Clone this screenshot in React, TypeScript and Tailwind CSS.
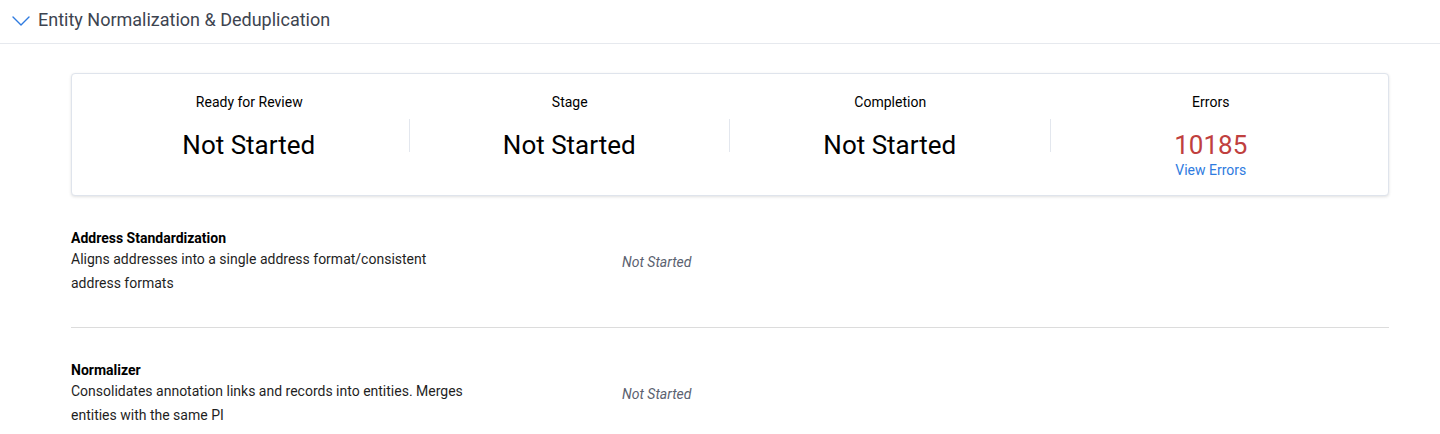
const stats = [
  { label: 'Ready for Review', value: 'Not Started' },
  { label: 'Stage', value: 'Not Started' },
  { label: 'Completion', value: 'Not Started' },
];

const steps = [
  {
    title: 'Address Standardization',
    description: 'Aligns addresses into a single address format/consistent address formats',
    status: 'Not Started',
  },
  {
    title: 'Normalizer',
    description: 'Consolidates annotation links and records into entities. Merges entities with the same PI',
    status: 'Not Started',
  },
];

export default function App() {
  return (
    <div className="min-h-screen bg-white font-['Roboto',sans-serif] text-black">
      <header className="flex h-[44px] items-center gap-[8px] border-b border-[#e6e9ee] pb-[5px] pl-[12px]">
        <svg width="18" height="10" viewBox="0 0 18 10" fill="none" className="mt-[3px]">
          <polyline points="1,1 9,9 17,1" stroke="#2f7be0" strokeWidth="1.4" strokeLinecap="round" strokeLinejoin="round" />
        </svg>
        <span className="text-[18px] text-[#3d4450]">Entity Normalization &amp; Deduplication</span>
      </header>

      <main className="pl-[71px] pr-[51px] pt-[29px]">
        <div className="flex rounded-[4px] border border-[#dfe4ec] bg-white px-[17px] pb-[15px] pt-[19px] shadow-[0_1px_3px_rgba(0,0,0,0.12)]">
          {stats.map((s) => (
            <div key={s.label} className="flex w-[321px] flex-col items-center">
              <div className="text-[14px] leading-[18px]">{s.label}</div>
              <div className="mt-[8px] flex w-full">
                <div className="flex-1 pt-[11px] text-center text-[26px] leading-[30px]">{s.value}</div>
                <div className="h-[33px] w-px bg-[#e3e7ee]" />
              </div>
            </div>
          ))}
          <div className="flex w-[321px] flex-col items-center">
            <div className="text-[14px] leading-[18px]">Errors</div>
            <div className="mt-[19px] text-[26px] leading-[30px] text-[#c0403e]">10185</div>
            <a className="text-[14px] leading-[20px] text-[#2f7be0]">View Errors</a>
          </div>
        </div>

        <div className="mt-[33px]">
          {steps.map((step, i) => (
            <div
              key={step.title}
              className={`flex items-center pb-[32px] ${i > 0 ? 'border-t border-[#dcdcdc] pt-[33px]' : ''}`}
            >
              <div className="w-[551px] shrink-0">
                <div className="w-[400px]">
                  <div className="text-[14px] font-bold leading-[18px]">{step.title}</div>
                  <div className="text-[14px] leading-[24px] text-[#1f1f1f]">{step.description}</div>
                </div>
              </div>
              <div className="text-[14px] italic text-[#5b6270]">{step.status}</div>
            </div>
          ))}
        </div>
      </main>
    </div>
  );
}
